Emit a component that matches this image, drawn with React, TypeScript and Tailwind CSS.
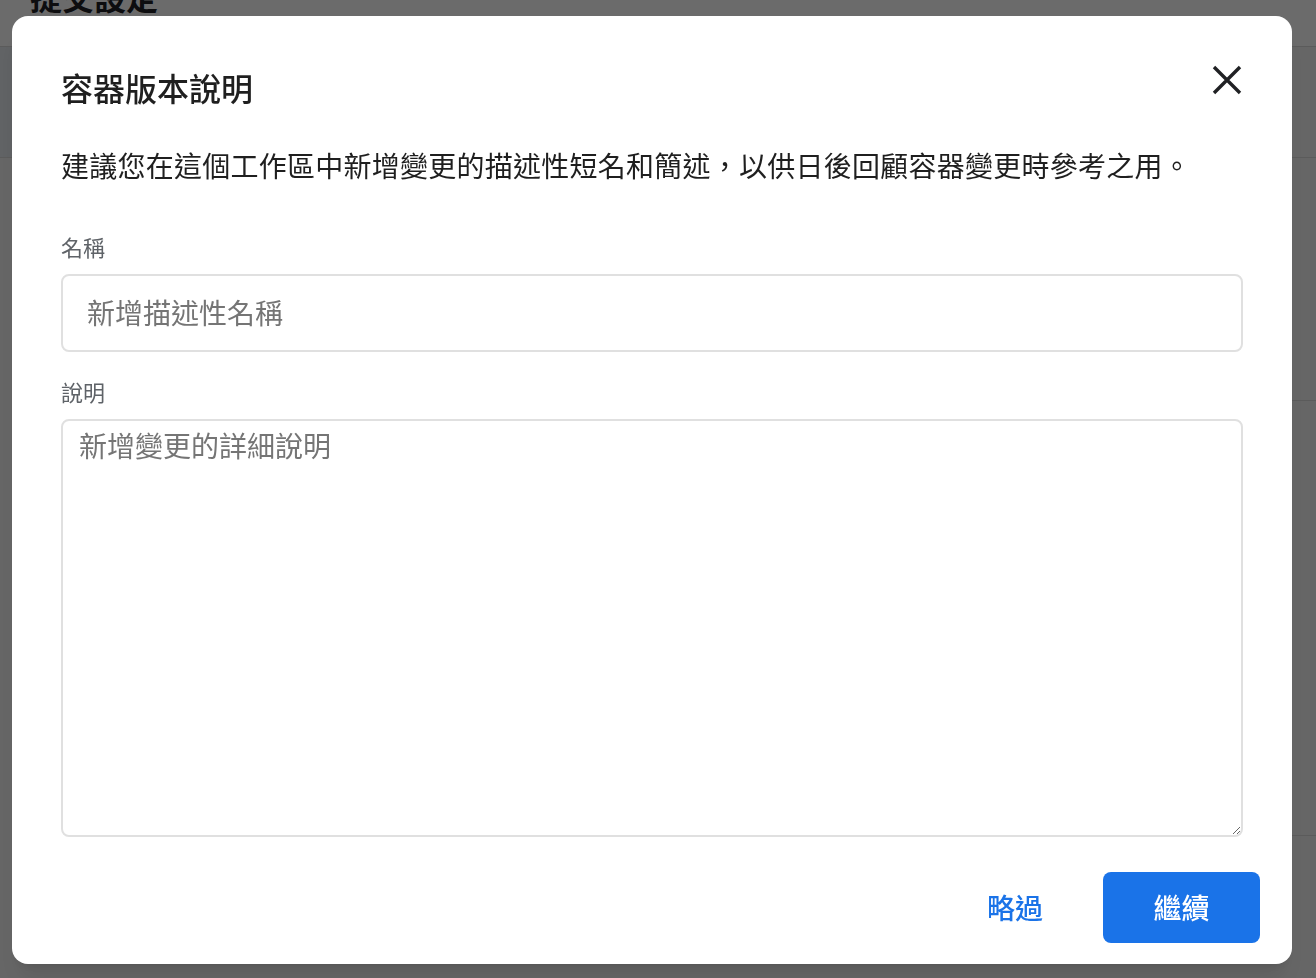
import React from "react";

const font = "font-['Noto_Sans_CJK_TC','Noto_Sans',sans-serif]";

function CloseIcon() {
  return (
    <svg width="30" height="30" viewBox="0 0 30 30" fill="none">
      <path
        d="M2 2 L28 28 M28 2 L2 28"
        stroke="#202124"
        strokeWidth="3.4"
        strokeLinecap="butt"
      />
    </svg>
  );
}

function BackgroundPage() {
  return (
    <div className={`h-screen overflow-hidden flex flex-col bg-[#f4f4f4] ${font}`}>
      <div className="h-[47px] shrink-0 bg-white border-b border-[#dadada] pl-[30px]">
        <div className="mt-[-24px] text-[32px] leading-[40px] font-semibold text-[#202124]">
          提交設定
        </div>
      </div>
      <div className="h-[111px] shrink-0 flex border-b border-[#dadada]">
        <div className="w-[640px] bg-[#e6ebf1]"></div>
        <div className="flex-1 bg-[#f4f4f4]"></div>
      </div>
      <div className="flex flex-1">
        <div className="flex-1"></div>
        <div className="w-[620px] flex flex-col">
          <div className="h-[243px] border-b border-[#dadada]"></div>
          <div className="h-[435px] border-b border-[#dadada]"></div>
        </div>
      </div>
      <div className="h-[20px] shrink-0 flex items-start gap-6 pl-[30px] mb-[-20px]">
        <div className="w-[46px] h-[46px] rounded-full bg-[#2f3133]"></div>
        <span className="text-[24px] leading-[28px] text-[#202124]">版本</span>
      </div>
    </div>
  );
}

export default function App() {
  return (
    <div className="relative">
      <BackgroundPage />
      <div className={`fixed inset-0 bg-black/[0.58] flex justify-start items-start pt-4 pl-3 ${font}`}>
        <div className="w-[1280px] h-[948px] bg-white rounded-2xl pl-[49px] pr-[32px] pt-[51px] pb-[21px] flex flex-col shadow-xl">
          <div className="mr-[17px] flex flex-col">
            <div className="flex items-start justify-between">
              <h2 className="text-[32px] leading-[40px] font-medium text-[#1f1f1f]">
                容器版本說明
              </h2>
              <button className="mt-[-2px] mr-[1px]">
                <CloseIcon />
              </button>
            </div>

            <p className="mt-[38px] text-[28px] leading-[40px] tracking-[0.25px] text-[#1f1f1f]">
              建議您在這個工作區中新增變更的描述性短名和簡述，以供日後回顧容器變更時參考之用。
            </p>

            <label className="mt-[46px] text-[22px] leading-[30px] text-[#5f6368]">
              名稱
            </label>
            <input
              className="mt-[13px] h-[78px] w-full border-2 border-[#e0e0e0] rounded-lg pl-[24px] pb-[3px] text-[28px] text-[#1f1f1f] placeholder:text-[#757575] outline-none"
              placeholder="新增描述性名稱"
            />

            <label className="mt-[24px] text-[22px] leading-[30px] text-[#5f6368]">
              說明
            </label>
            <textarea
              className="mt-[13px] h-[418px] w-full border-2 border-[#e0e0e0] rounded-lg px-[16px] pt-[4px] text-[28px] leading-[40px] text-[#1f1f1f] placeholder:text-[#757575] outline-none"
              placeholder="新增變更的詳細說明"
            />
          </div>

          <div className="mt-[35px] flex justify-end items-center gap-4">
            <button className="h-[71px] px-[44px] pb-[2px] text-[28px] font-medium text-[#1a73e8] rounded-lg">
              略過
            </button>
            <button className="h-[71px] w-[157px] pb-[2px] text-[28px] font-medium text-white bg-[#1a73e8] rounded-lg">
              繼續
            </button>
          </div>
        </div>
      </div>
    </div>
  );
}
